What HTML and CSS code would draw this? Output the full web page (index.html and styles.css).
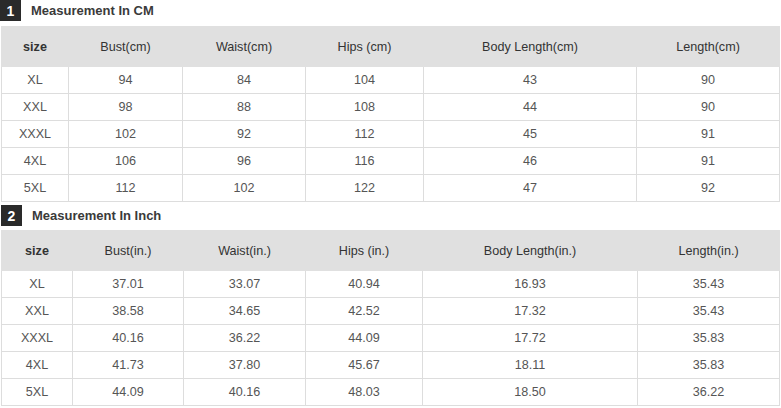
FILE: index.html
```html
<!DOCTYPE html>
<html>
<head>
<meta charset="utf-8">
<link rel="stylesheet" href="styles.css">
</head>
<body>
<div class="page">
  <div class="title first"><span class="badge">1</span><span class="title-text">Measurement In CM</span></div>
  <table class="size-table cm">
    <colgroup><col class="c1"><col class="c2"><col class="c3"><col class="c4"><col class="c5"><col class="c6"></colgroup>
    <tr class="head"><th class="size-h">size</th><th>Bust(cm)</th><th>Waist(cm)</th><th>Hips (cm)</th><th>Body Length(cm)</th><th>Length(cm)</th></tr>
    <tr><td>XL</td><td>94</td><td>84</td><td>104</td><td>43</td><td>90</td></tr>
    <tr><td>XXL</td><td>98</td><td>88</td><td>108</td><td>44</td><td>90</td></tr>
    <tr><td>XXXL</td><td>102</td><td>92</td><td>112</td><td>45</td><td>91</td></tr>
    <tr><td>4XL</td><td>106</td><td>96</td><td>116</td><td>46</td><td>91</td></tr>
    <tr><td>5XL</td><td>112</td><td>102</td><td>122</td><td>47</td><td>92</td></tr>
  </table>
  <div class="title second"><span class="badge">2</span><span class="title-text">Measurement In Inch</span></div>
  <table class="size-table inch">
    <colgroup><col class="d1"><col class="d2"><col class="d3"><col class="d4"><col class="d5"><col class="d6"></colgroup>
    <tr class="head"><th class="size-h">size</th><th>Bust(in.)</th><th>Waist(in.)</th><th>Hips (in.)</th><th>Body Length(in.)</th><th>Length(in.)</th></tr>
    <tr><td>XL</td><td>37.01</td><td>33.07</td><td>40.94</td><td>16.93</td><td>35.43</td></tr>
    <tr><td>XXL</td><td>38.58</td><td>34.65</td><td>42.52</td><td>17.32</td><td>35.43</td></tr>
    <tr><td>XXXL</td><td>40.16</td><td>36.22</td><td>44.09</td><td>17.72</td><td>35.83</td></tr>
    <tr><td>4XL</td><td>41.73</td><td>37.80</td><td>45.67</td><td>18.11</td><td>35.83</td></tr>
    <tr><td>5XL</td><td>44.09</td><td>40.16</td><td>48.03</td><td>18.50</td><td>36.22</td></tr>
  </table>
</div>
</body>
</html>
```
FILE: styles.css
```css
html, body {
  margin: 0;
  padding: 0;
  background: #ffffff;
}
.page {
  width: 781px;
  font-family: "Liberation Sans", Arial, sans-serif;
}
.title {
  display: flex;
  align-items: center;
  height: 21px;
}
.title.first {
  margin-bottom: 5px;
}
.title.second {
  margin-top: 3px;
  margin-left: 1px;
  margin-bottom: 4px;
}
.badge {
  width: 21px;
  height: 21px;
  background: #2a2a2a;
  color: #ffffff;
  font-weight: bold;
  font-size: 14px;
  display: flex;
  align-items: center;
  justify-content: center;
}
.title-text {
  margin-left: 10px;
  font-size: 13px;
  font-weight: bold;
  color: #3a3a3a;
}
.size-table {
  border-collapse: collapse;
  table-layout: fixed;
  width: 778px;
  margin-left: 1px;
  font-size: 12.6px;
  color: #555555;
}
.size-table th {
  background: #e0e0e0;
  height: 39px;
  padding: 0;
  font-weight: normal;
  color: #333333;
  text-align: center;
  border: 1px solid #e0e0e0;
}
.size-table th.size-h {
  font-weight: bold;
}
.size-table td {
  height: 26px;
  padding: 0;
  text-align: center;
  border: 1px solid #dddddd;
}
.c1 { width: 67px; }
.c2 { width: 114px; }
.c3 { width: 123px; }
.c4 { width: 118px; }
.c5 { width: 213px; }
.c6 { width: 143px; }
.d1 { width: 71px; }
.d2 { width: 111px; }
.d3 { width: 122px; }
.d4 { width: 117px; }
.d5 { width: 215px; }
.d6 { width: 142px; }
```
